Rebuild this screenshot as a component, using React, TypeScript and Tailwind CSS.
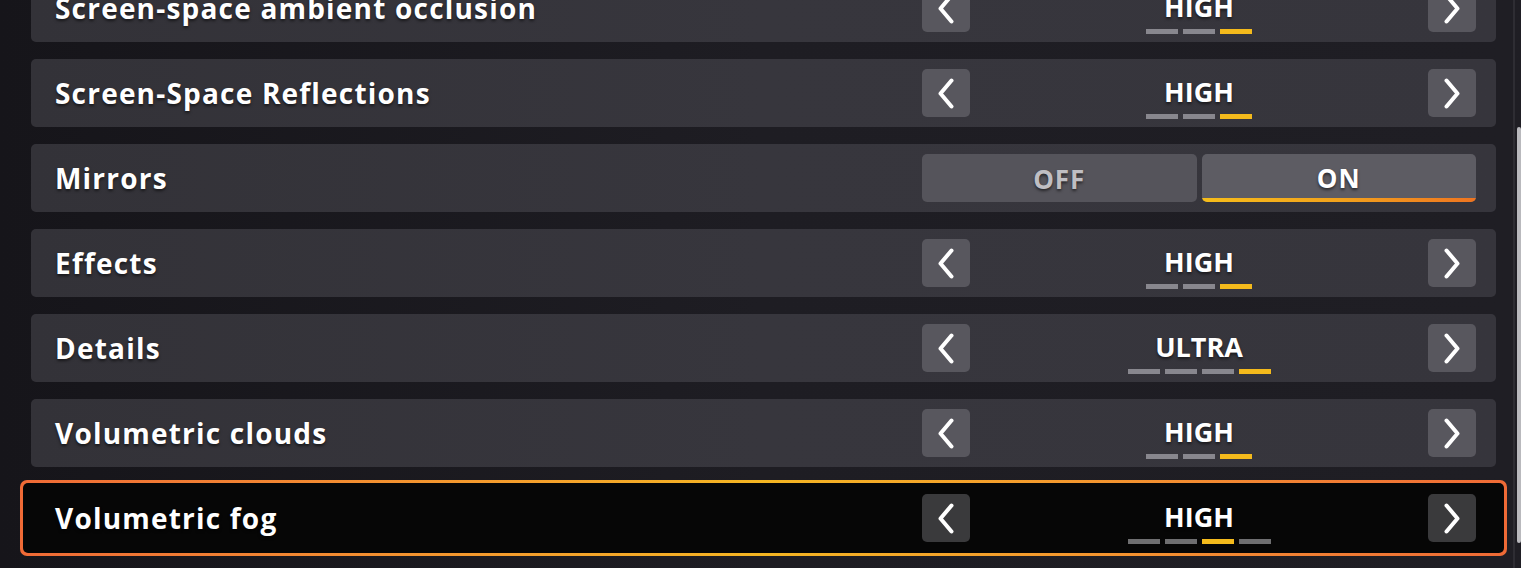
import React from "react";

type Setting =
  | { kind: "level"; label: string; value: string; levels: number; active: number }
  | { kind: "toggle"; label: string; on: boolean };

const settings: Setting[] = [
  { kind: "level", label: "Screen-space ambient occlusion", value: "HIGH", levels: 3, active: 2 },
  { kind: "level", label: "Screen-Space Reflections", value: "HIGH", levels: 3, active: 2 },
  { kind: "toggle", label: "Mirrors", on: true },
  { kind: "level", label: "Effects", value: "HIGH", levels: 3, active: 2 },
  { kind: "level", label: "Details", value: "ULTRA", levels: 4, active: 3 },
  { kind: "level", label: "Volumetric clouds", value: "HIGH", levels: 3, active: 2 },
  { kind: "level", label: "Volumetric fog", value: "HIGH", levels: 4, active: 2 },
];

const shadow = "[text-shadow:0_2px_3px_rgba(0,0,0,0.55)]";

function Chevron({ dir }: { dir: "left" | "right" }) {
  const d = dir === "left" ? "M14.5 2.5 L3.5 15.5 L14.5 28.5" : "M3.5 2.5 L14.5 15.5 L3.5 28.5";
  return (
    <svg width="18" height="31" viewBox="0 0 18 31" fill="none">
      <path d={d} stroke="white" strokeWidth="4" strokeLinecap="round" strokeLinejoin="round" />
    </svg>
  );
}

function ArrowButton({ dir, selected }: { dir: "left" | "right"; selected: boolean }) {
  return (
    <button
      className={`flex h-[48px] w-[48px] items-center justify-center rounded-[5px] ${
        selected ? "bg-[#3a3a3c]" : "bg-[#58575e]"
      }`}
    >
      <Chevron dir={dir} />
    </button>
  );
}

function LevelControl({ value, levels, active, selected }: { value: string; levels: number; active: number; selected: boolean }) {
  return (
    <div className="flex w-[554px] items-center justify-between">
      <ArrowButton dir="left" selected={selected} />
      <div className="flex flex-col items-center pt-[10px]">
        <span className={`text-[27px] font-bold leading-none text-white ${shadow}`}>{value}</span>
        <div className="mt-[9px] flex gap-[5px]">
          {Array.from({ length: levels }).map((_, i) => (
            <div
              key={i}
              className={`h-[5px] w-[32px] ${
                i === active ? "bg-[#f4ba1c]" : selected ? "bg-[#6e6e70]" : "bg-[#88878e]"
              }`}
            />
          ))}
        </div>
      </div>
      <ArrowButton dir="right" selected={selected} />
    </div>
  );
}

function ToggleControl({ on }: { on: boolean }) {
  return (
    <div className="flex w-[554px] gap-[5px]">
      <div
        className={`flex h-[48px] flex-1 items-center justify-center rounded-[5px] bg-[#55545b] pt-[2px] text-[26px] font-bold tracking-[1px] ${shadow} ${
          on ? "text-[#bfbec3]" : "text-white"
        }`}
      >
        OFF
      </div>
      <div className="flex h-[48px] flex-1 flex-col overflow-hidden rounded-[5px] bg-[#5d5c63]">
        <div className={`flex flex-1 items-center justify-center pt-[5px] text-[26px] font-bold tracking-[1px] text-white ${shadow}`}>ON</div>
        <div className="h-[5px] bg-gradient-to-r from-[#f6bd1a] via-[#f2a21c] to-[#ee7420]" />
      </div>
    </div>
  );
}

function Row({ setting, selected }: { setting: Setting; selected: boolean }) {
  const content = (
    <>
      <span className={`text-[28px] font-bold leading-none tracking-[1.2px] text-white ${shadow}`}>{setting.label}</span>
      {setting.kind === "level" ? (
        <LevelControl value={setting.value} levels={setting.levels} active={setting.active} selected={selected} />
      ) : (
        <ToggleControl on={setting.on} />
      )}
    </>
  );

  if (selected) {
    return (
      <div className="-mx-[11px] -my-[4px] rounded-[7px] bg-gradient-to-r from-[#ef6a36] via-[#f5b622] to-[#ef6a36] p-[3px]">
        <div className="flex h-[70px] items-center justify-between rounded-[5px] bg-[#060606] pl-[32px] pr-[28px]">
          {content}
        </div>
      </div>
    );
  }

  return (
    <div className="flex h-[68px] items-center justify-between rounded-[5px] bg-gradient-to-r from-[#333238] via-[#37363d] to-[#36353c] pl-[24px] pr-[20px]">
      {content}
    </div>
  );
}

export default function App() {
  return (
    <div
      className="flex h-[568px] w-[1521px] overflow-hidden bg-gradient-to-r from-[#16151a] via-[#1e1d23] to-[#1f1e24]"
      style={{ fontFamily: "'Open Sans', 'Noto Sans', sans-serif" }}
    >
      <div className="flex-1 pl-[31px] pr-[17px]">
        <div className="-mt-[26px] flex flex-col gap-[17px]">
          {settings.map((s, i) => (
            <Row key={s.label} setting={s} selected={i === settings.length - 1} />
          ))}
        </div>
      </div>
      <div className="w-[8px] border-l-2 border-[#2e2d33]">
        <div className="ml-[2px] mt-[127px] h-[416px] w-[4px] rounded-full bg-[#b9b9bd]" />
      </div>
    </div>
  );
}
